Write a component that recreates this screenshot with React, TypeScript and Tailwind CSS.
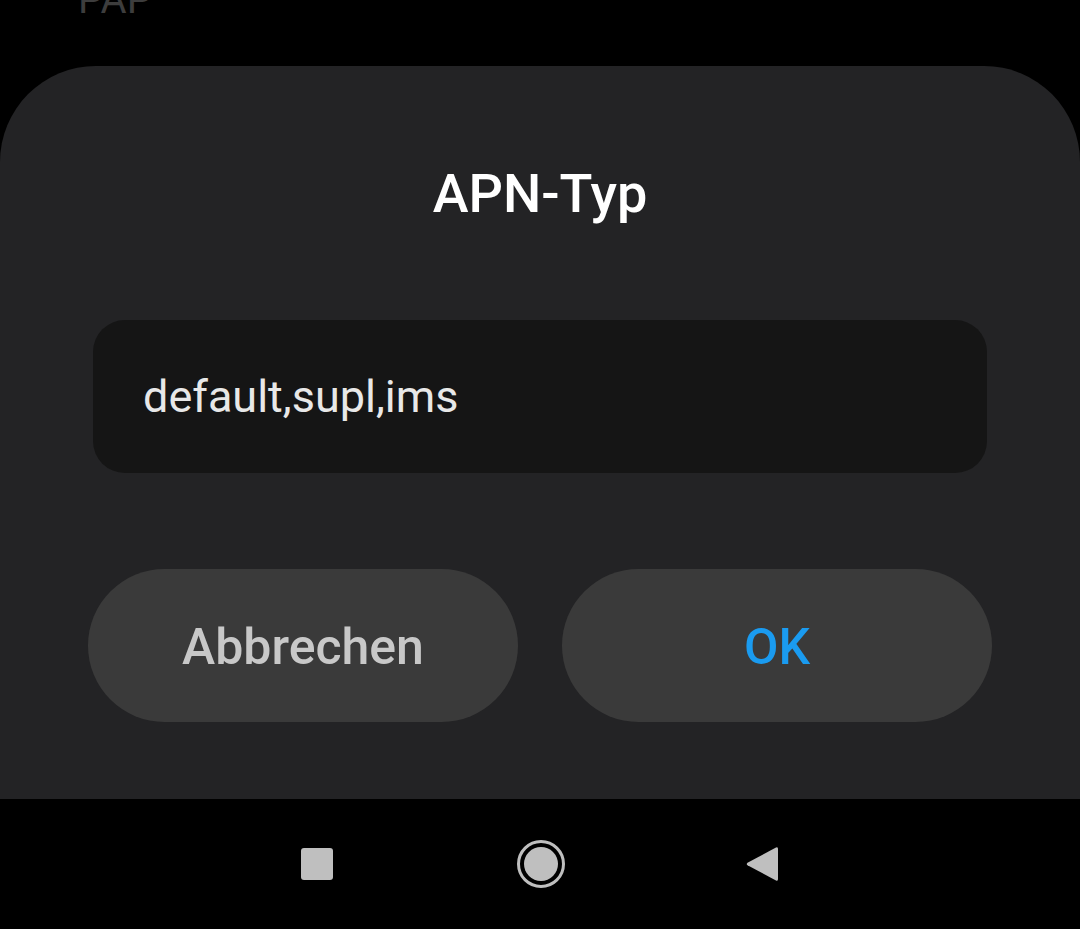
const NavBar = () => {
  return (
    <div className="flex h-[130px] items-center justify-center bg-black pr-[2px]">
      {/* Recents */}
      <div className="mr-[184px] h-[32px] w-[32px] rounded-[3px] bg-[#bfbfbf]" />

      {/* Home */}
      <div className="flex h-[48px] w-[48px] items-center justify-center rounded-full border-[3px] border-[#bfbfbf]">
        <div className="h-[34px] w-[34px] rounded-full bg-[#bfbfbf]" />
      </div>

      {/* Back */}
      <svg width="32" height="36" viewBox="0 0 32 36" className="ml-[181px] block">
        <path
          d="M30 1.5 Q32 0.5 32 3 L32 33 Q32 35.5 30 34.5 L1.5 19.3 Q0 18 1.5 16.7 Z"
          fill="#bfbfbf"
        />
      </svg>
    </div>
  );
};

export default function App() {
  return (
    <div
      className="flex h-[929px] w-[1080px] flex-col overflow-hidden bg-black"
      style={{ fontFamily: "Roboto, 'Noto Sans', sans-serif" }}
    >
      {/* Cut-off list item behind the sheet */}

      <div className="h-[66px] overflow-hidden">
        <p className="-mt-[20px] pl-[78px] text-[40px] leading-none text-[#3d3d3d]">
          PAP
        </p>
      </div>

      {/* Bottom sheet */}

      <div className="flex flex-1 flex-col rounded-t-[96px] bg-[#232325]">
        <h2 className="pt-[101px] text-center text-[54px] font-medium leading-none text-white">
          APN-Typ
        </h2>

        <div className="mx-[93px] mt-[99px] flex h-[153px] items-center rounded-[32px] bg-[#151515] px-[50px]">
          <span className="text-[45px] leading-none text-[#e8e8e8]">
            default,supl,ims
          </span>
        </div>

        <div className="mx-[88px] mt-[96px] flex gap-[44px]">
          <button className="flex h-[153px] flex-1 items-center justify-center rounded-full bg-[#3a3a3a] pt-[3px] text-[50px] font-medium leading-none text-[#c8c8c8]">
            Abbrechen
          </button>
          <button className="flex h-[153px] flex-1 items-center justify-center rounded-full bg-[#3a3a3a] pt-[3px] text-[50px] font-medium leading-none text-[#1a9bf0]">
            OK
          </button>
        </div>
      </div>

      <NavBar />
    </div>
  );
}
